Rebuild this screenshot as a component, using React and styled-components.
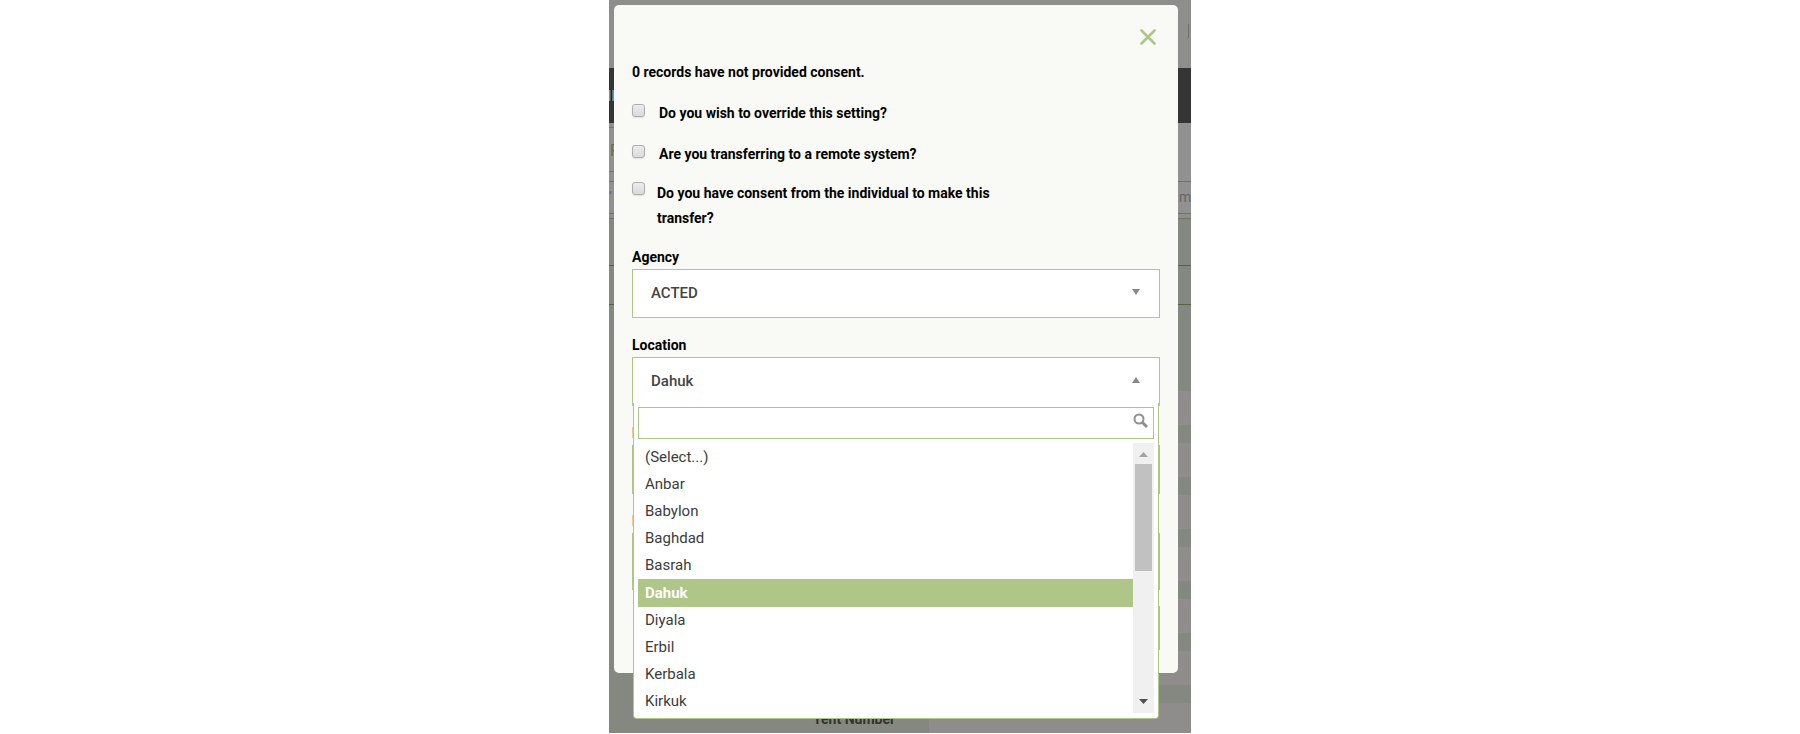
import React from "react";
import styled, { createGlobalStyle } from "styled-components";

const green = "#aec688";

const GlobalStyle = createGlobalStyle`
  *, *::before, *::after { box-sizing: border-box; }
  body {
    margin: 0;
    background: #fff;
    font-family: Roboto, "Liberation Sans", sans-serif;
    font-size: 14px;
    color: #000;
  }
  button, input, select, textarea { font: inherit; margin: 0; }
`;

const Stage = styled.main`
  position: relative;
  max-width: 582px;
  margin: 0 auto;
  overflow: hidden;
`;

/* Dimmed page behind the dialog */
const Page = styled.div`
  background: #8e8e8c;
  color: #333;
`;

const TopBar = styled.header`
  display: flex;
  justify-content: flex-end;
  height: 68px;
  padding: 24px 2px 0 0;
`;

const Divider = styled.span`
  width: 1px;
  height: 14px;
  background: #6e6e6e;
`;

const NavBar = styled.nav`
  display: flex;
  align-items: center;
  height: 55px;
  background: #353535;
`;

const Logo = styled.svg`
  display: block;
  width: 5px;
  height: 11px;
`;

const SubHeader = styled.div`
  height: 58px;
  padding-top: 4px;
  background: #919191;
`;

const FormTab = styled.div`
  width: 120px;
  height: 45px;
  padding-left: 1px;
  border: solid #75795d;
  border-width: 1px 0;
  line-height: 45px;
  font-size: 16px;
  color: #68703f;
`;

const Tools = styled.div`
  display: flex;
  justify-content: space-between;
  height: 33px;
  border: solid #6c775a;
  border-width: 1px 0;
  background: #919191;
  line-height: 31px;
  color: #666;
`;

const ToolText = styled.span`
  width: 12px;
  overflow: hidden;
  color: ${(p) => (p.$link ? "#4a6c88" : "inherit")};
`;

const Form = styled.section`
  margin-top: 4px;
  border-top: 1px solid #6c775a;
  background: #858880;
`;

const FormBlock = styled.div`
  height: ${(p) => p.$height}px;
  border-bottom: ${(p) => (p.$line ? "1px solid #55613f" : "0")};
`;

const FormRow = styled.div`
  display: grid;
  grid-template-columns: 55% 1fr;
  height: 34px;
  margin-bottom: 18px;

  &:last-child {
    height: 30px;
    margin-bottom: 0;
    overflow: hidden;
  }
`;

const RowLabel = styled.span`
  padding-right: 34px;
  text-align: right;
  font-weight: 700;
  line-height: 32px;
`;

const RowValue = styled.span`
  background: #8e8d8c;
`;

/* Dialog */
const Dialog = styled.form`
  position: absolute;
  top: 5px;
  left: 5px;
  right: 13px;
  display: flex;
  flex-direction: column;
  padding: 20px 18px 23px;
  border-radius: 5px;
  background: #f9faf5;
`;

const DialogHeader = styled.div`
  display: flex;
  justify-content: flex-end;
  height: 35px;
`;

const CloseButton = styled.button`
  display: flex;
  align-items: center;
  justify-content: center;
  width: 24px;
  height: 24px;
  padding: 0;
  border: 0;
  background: none;
  color: ${green};
`;

const Notice = styled.p`
  margin: 0 0 16px;
  font-weight: 700;
  line-height: 25px;
`;

const CheckRow = styled.div`
  display: flex;
  gap: ${(p) => (p.$tight ? 12 : 14)}px;
  margin-bottom: ${(p) => p.$after}px;
`;

const CheckBox = styled.input`
  appearance: none;
  flex: none;
  width: 13px;
  height: 13px;
  margin-top: ${(p) => (p.$tight ? 1 : 3)}px;
  border: 1px solid #adadad;
  border-radius: 3px;
  background: linear-gradient(#ededed, #dadada);
  box-shadow: 0 1px 1px #e2e2e0;
`;

const CheckLabel = styled.label`
  max-width: 350px;
  font-weight: 700;
  line-height: 25px;
`;

const Field = styled.div`
  position: relative;
  display: flex;
  flex-direction: column;
  gap: 2px;
  margin-bottom: ${(p) => p.$after || 17}px;
`;

const FieldLabel = styled.label`
  font-weight: 700;
  line-height: 20px;
`;

const SelectWrap = styled.div`
  display: grid;
  align-items: center;

  > * { grid-area: 1 / 1; }
`;

const Select = styled.select`
  appearance: none;
  width: 100%;
  height: 49px;
  padding: 0 40px 2px 18px;
  border: 1px solid ${green};
  border-radius: 0;
  background: #fff;
  font-size: 15px;
  font-weight: 500;
  color: #444;
`;

const Caret = styled.svg`
  justify-self: end;
  width: 8px;
  height: 6px;
  margin: 0 20px 3px 0;
  fill: #888;
  pointer-events: none;
`;

const Notes = styled.textarea`
  display: block;
  width: 100%;
  height: 57px;
  border: 1px solid ${green};
  border-radius: 0;
  resize: none;
`;

const SubmitButton = styled.button`
  align-self: flex-end;
  width: 120px;
  height: 44px;
  border: 0;
  background: ${green};
  color: #fff;
`;

/* Open list under the location field */
const Dropdown = styled.div`
  position: absolute;
  z-index: 1;
  top: 68px;
  left: 1px;
  right: 1px;
  padding: 4px 4px 5px;
  border: 1px solid ${green};
  border-top: 0;
  border-radius: 0 0 4px 4px;
  background: #fff;
`;

const SearchBox = styled.div`
  display: flex;
  height: 32px;
  margin-bottom: 4px;
  border: 1px solid ${green};
`;

const SearchInput = styled.input`
  flex: 1;
  min-width: 0;
  padding: 0 6px;
  border: 0;
  outline: 0;
  background: none;
  font-size: 15px;
`;

const SearchIcon = styled.svg`
  width: 15px;
  height: 15px;
  margin: 5px 5px 0 0;
`;

const ListArea = styled.div`
  display: flex;
  height: 270px;
`;

const Options = styled.ul`
  flex: 1;
  margin: 0;
  padding: 1px 0 0;
  overflow: hidden;
  list-style: none;
`;

const Option = styled.li`
  height: ${(p) => (p.$active ? 28 : 27)}px;
  padding-left: 7px;
  background: ${(p) => (p.$active ? green : "transparent")};
  color: ${(p) => (p.$active ? "#fff" : "#3c3c3c")};
  font-size: 15px;
  font-weight: ${(p) => (p.$active ? 700 : 400)};
  line-height: ${(p) => (p.$active ? 28 : 26)}px;
`;

const ScrollBar = styled.div`
  display: flex;
  flex-direction: column;
  align-items: center;
  width: 21px;
  background: #f0f0f0;
`;

const ScrollArrow = styled.svg`
  flex: none;
  width: 21px;
  height: 21px;
  fill: ${(p) => p.$tone};
`;

const Thumb = styled.span`
  width: 17px;
  height: 107px;
  margin-bottom: auto;
  background: #c1c1c1;
`;

const locations = [
  "(Select...)", "Anbar", "Babylon", "Baghdad", "Basrah",
  "Dahuk", "Diyala", "Erbil", "Kerbala", "Kirkuk",
];

const checks = [
  { id: "override", text: "Do you wish to override this setting?", after: 16 },
  { id: "remote", text: "Are you transferring to a remote system?", after: 14 },
  {
    id: "consent",
    text: "Do you have consent from the individual to make this transfer?",
    after: 16,
    tight: true,
  },
];

function SelectField({ id, label, value, options, open, children }) {
  return (
    <Field>
      <FieldLabel htmlFor={id}>{label}</FieldLabel>
      <SelectWrap>
        <Select id={id} defaultValue={value}>
          {options.map((o) => (
            <option key={o}>{o}</option>
          ))}
        </Select>
        <Caret viewBox="0 0 8 6" aria-hidden="true">
          <path d={open ? "M4 0 8 6H0Z" : "M0 0H8L4 6Z"} />
        </Caret>
      </SelectWrap>
      {children}
    </Field>
  );
}

function LocationList() {
  return (
    <Dropdown>
      <SearchBox>
        <SearchInput type="text" aria-label="Search locations" />
        <SearchIcon viewBox="0 0 15 15" fill="none" stroke="#8e8e8e" aria-hidden="true">
          <circle cx="6" cy="6" r="4.500" strokeWidth="2" />
          <path d="M9 9 14 14" strokeWidth="3" />
        </SearchIcon>
      </SearchBox>
      <ListArea>
        <Options role="listbox" aria-label="Location">
          {locations.map((name) => (
            <Option
              key={name}
              role="option"
              aria-selected={name === "Dahuk"}
              $active={name === "Dahuk"}
            >
              {name}
            </Option>
          ))}
        </Options>
        <ScrollBar>
          <ScrollArrow $tone="#a3a3a3" viewBox="0 0 21 21">
            <path d="M6 14 10.500 9 15 14Z" />
          </ScrollArrow>
          <Thumb />
          <ScrollArrow $tone="#505050" viewBox="0 0 21 21">
            <path d="M6 7H15L10.500 12Z" />
          </ScrollArrow>
        </ScrollBar>
      </ListArea>
    </Dropdown>
  );
}

function BackgroundPage() {
  return (
    <Page aria-hidden="true">
      <TopBar>
        <Divider />
      </TopBar>
      <NavBar>
        <Logo viewBox="0 0 5 11">
          <path d="M0 0H1V11H0Z" fill="#8a8a8a" />
          <path d="M1 0H2V11H1Z" fill="#6d5540" />
          <path d="M2 0H3V11H2Z" fill="#242424" />
          <path d="M3 0H4V11H3Z" fill="#347f9c" />
          <path d="M4 0H5V11H4Z" fill="#8a8a8a" />
        </Logo>
      </NavBar>
      <SubHeader>
        <FormTab>F</FormTab>
      </SubHeader>
      <Tools>
        <ToolText $link>’</ToolText>
        <ToolText>me</ToolText>
      </Tools>
      <Form>
        <FormBlock $height={47} $line />
        <FormBlock $height={39} $line />
        <FormBlock $height={86} />
        {["", "", "", "", "", "", "Tent Number"].map((label, i) => (
          <FormRow key={i}>
            <RowLabel>{label}</RowLabel>
            <RowValue />
          </FormRow>
        ))}
      </Form>
    </Page>
  );
}

export default function App() {
  return (
    <>
      <GlobalStyle />
      <Stage>
        <BackgroundPage />
        <Dialog onSubmit={(e) => e.preventDefault()}>
          <DialogHeader>
            <CloseButton type="button" aria-label="Close">
              <svg width="16" height="16" viewBox="0 0 16 16" aria-hidden="true">
                <path
                  d="M1.500 1.500 14.500 14.500M14.500 1.500 1.500 14.500"
                  stroke="currentColor"
                  strokeWidth="2.600"
                  strokeLinecap="round"
                />
              </svg>
            </CloseButton>
          </DialogHeader>
          <Notice>0 records have not provided consent.</Notice>
          {checks.map((c) => (
            <CheckRow key={c.id} $tight={c.tight} $after={c.after}>
              <CheckBox type="checkbox" id={c.id} $tight={c.tight} />
              <CheckLabel htmlFor={c.id}>{c.text}</CheckLabel>
            </CheckRow>
          ))}
          <SelectField id="agency" label="Agency" value="ACTED" options={["ACTED"]} />
          <SelectField id="location" label="Location" value="Dahuk" options={locations} open>
            <LocationList />
          </SelectField>
          <SelectField id="recipient" label="Recipient" value="" options={[""]} />
          <Field $after={16}>
            <FieldLabel htmlFor="notes">Notes</FieldLabel>
            <Notes id="notes" />
          </Field>
          <SubmitButton type="submit">Transfer</SubmitButton>
        </Dialog>
      </Stage>
    </>
  );
}
